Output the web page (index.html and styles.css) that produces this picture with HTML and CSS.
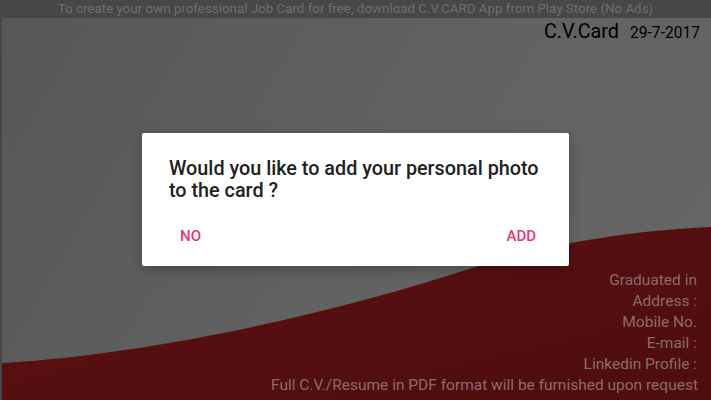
FILE: index.html
```html
<!DOCTYPE html>
<html lang="en">
<head>
  <meta charset="UTF-8" />
  <meta name="viewport" content="width=device-width, initial-scale=1.0" />
  <title>C.V.Card</title>
  <link rel="stylesheet" href="styles.css">
</head>
<body>
  <p class="notice">To create your own professional Job Card for free, download C.V.CARD App from Play Store (No Ads)</p>

  <div class="card">
    <svg class="wave" viewBox="0 0 709 382" preserveAspectRatio="none">
      <defs>
        <linearGradient id="red" x1="0" y1="0" x2="1" y2="1">
          <stop offset="0" stop-color="#5e1112" />
          <stop offset="1" stop-color="#4e0d0e" />
        </linearGradient>
      </defs>
      <path d="M0 345 C 150 336, 330 296, 470 250 C 560 222, 640 212, 709 209 L709 382 L0 382 Z" fill="url(#red)" />
    </svg>

    <div class="card-head">
      <span class="brand">C.V.Card</span>
      <span class="date">29-7-2017</span>
    </div>

    <ul class="details">
      <li>Graduated in</li>
      <li>Address :</li>
      <li>Mobile No.</li>
      <li>E-mail :</li>
      <li>Linkedin Profile :</li>
      <li class="wide">Full C.V./Resume in PDF format will be furnished upon request</li>
    </ul>
  </div>

  <div class="dialog">
    <p class="dialog-text">Would you like to add your personal photo to the card ?</p>
    <div class="dialog-actions">
      <button type="button">NO</button>
      <button type="button">ADD</button>
    </div>
  </div>
</body>
</html>
```

FILE: styles.css
```css
:root {
  --bar: #474747;
  --pink: #eb3574;
  --ink: #212121;
  --dim-text: #8a6b6b;
}

* {
  margin: 0;
  padding: 0;
  box-sizing: border-box;
}

body {
  width: 711px;
  height: 400px;
  overflow: hidden;
  background-color: var(--bar);
  font-family: Roboto, "Liberation Sans", sans-serif;
  position: relative;
}

.notice {
  height: 18px;
  line-height: 17px;
  font-size: 13.35px;
  color: #6e6e6e;
  text-align: center;
  white-space: nowrap;
}

.card {
  position: relative;
  margin-left: 2px;
  height: 382px;
  background: linear-gradient(120deg, #575757, #626262 55%, #666);
  display: flex;
  flex-direction: column;
  justify-content: space-between;
  overflow: hidden;
}

.wave {
  position: absolute;
  left: 0;
  top: 0;
  width: 100%;
  height: 100%;
}

.card-head {
  position: relative;
  display: flex;
  justify-content: flex-end;
  align-items: baseline;
  gap: 11px;
  padding: 2px 11px 0 0;
  color: #000;
}

.brand {
  font-size: 19.8px;
}

.date {
  font-size: 15.6px;
}

.details {
  position: relative;
  list-style: none;
  text-align: right;
  padding: 0 13px 4px 0;
  font-size: 15.5px;
  line-height: 21px;
  color: var(--dim-text);
}

.details li {
  padding-right: 1px;
}

.details .wide {
  margin-right: -1px;
}

.dialog {
  position: absolute;
  left: 142px;
  top: 133px;
  width: 427px;
  height: 133px;
  background: #fff;
  border-radius: 2px;
  padding: 25px 20px 0 27px;
  box-shadow: 0 4px 12px rgba(0, 0, 0, 0.25);
}

.dialog-text {
  font-size: 19.8px;
  font-weight: 500;
  line-height: 22px;
  color: var(--ink);
}

.dialog-actions {
  display: flex;
  justify-content: space-between;
  padding: 25px 13px 0 11px;
}

button {
  background: none;
  border: none;
  font-family: inherit;
  font-size: 15px;
  font-weight: 500;
  line-height: normal;
  color: var(--pink);
  cursor: pointer;
}
```
